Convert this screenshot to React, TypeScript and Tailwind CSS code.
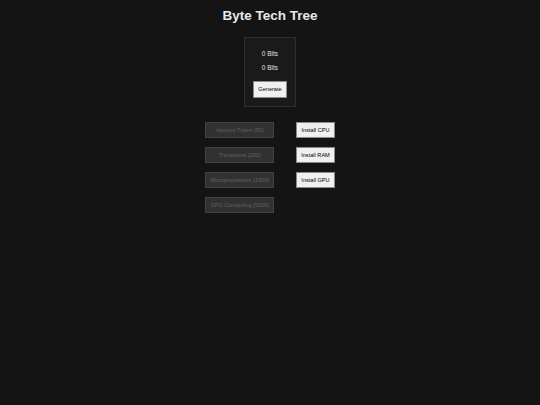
export default function App() {
  const techs = ["Vacuum Tubes (50)", "Transistors (200)", "Microprocessors (1000)", "GPU Computing (5000)"];
  const installs = ["Install CPU", "Install RAM", "Install GPU"];
  return (
    <div className="antialiased w-[540px] h-[405px] bg-[#141414] flex flex-col items-center" style={{ fontFamily: '"Liberation Sans", Arial, sans-serif' }}>
      <h1 className="mt-[9px] text-[13.5px] leading-[13.5px] font-bold text-[#e8e8e8]">Byte Tech Tree</h1>
      <div className="mt-[14.5px] w-[52px] h-[69.5px] border border-[#2e2e2e] bg-[#1a1a1a] flex flex-col items-center pt-[12px]">
        <p className="text-[6.5px] leading-[8px] text-[#e0e0e0]">0 Bits</p>
        <p className="mt-[6.3px] text-[6.5px] leading-[8px] text-[#e0e0e0]">0 Bits</p>
        <button className="mt-[8.7px] w-[34px] h-[17px] bg-[#f0f0f0] border border-[#8a8a8a] text-[5.6px] text-black flex items-center justify-center">Generate</button>
      </div>
      <div className="mt-[15.5px] flex justify-center gap-[22px]">
        <div className="flex flex-col gap-[9.5px]">
          {techs.map((t) => (
            <button key={t} className="w-[69px] h-[15.5px] bg-[#313131] border border-[#424242] text-[5.6px] text-[#626262] flex items-center justify-center whitespace-nowrap">{t}</button>
          ))}
        </div>
        <div className="flex flex-col gap-[9px]">
          {installs.map((t) => (
            <button key={t} className="w-[38.5px] h-[16px] bg-[#f0f0f0] border border-[#8a8a8a] text-[5.6px] text-black flex items-center justify-center whitespace-nowrap">{t}</button>
          ))}
        </div>
      </div>
    </div>
  );
}
